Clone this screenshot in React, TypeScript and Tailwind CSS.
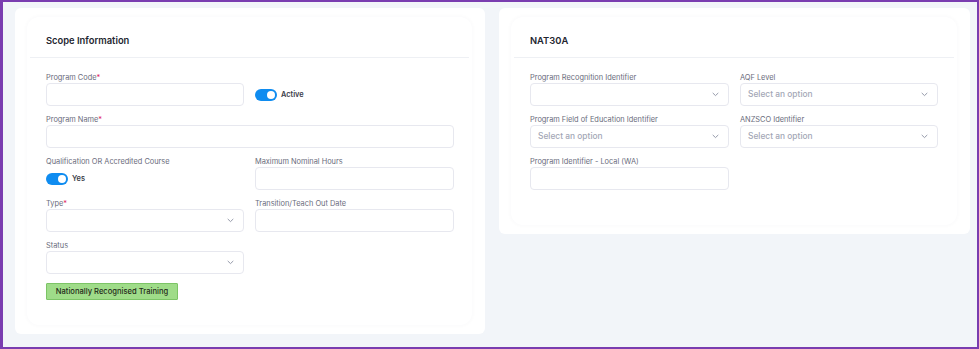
import React from "react";

const font = { fontFamily: "Inter, 'Noto Sans', sans-serif" };

function Chevron() {
  return (
    <svg width="7" height="5" viewBox="0 0 7 5" className="text-[#8a8fa0]">
      <path d="M1 1.2 L3.5 3.6 L6 1.2" fill="none" stroke="currentColor" strokeWidth="0.9" strokeLinecap="round" strokeLinejoin="round" />
    </svg>
  );
}

function Label({ text, req }: { text: string; req?: boolean }) {
  return (
    <div className="h-[11px] pt-[3px] flex items-center text-[7.4px] leading-none text-[#6a6c7c] whitespace-nowrap">
      {text}
      {req && <span className="text-[#e0245e]">*</span>}
    </div>
  );
}

function Input() {
  return <div className="h-[23px] rounded-[4px] border border-[#e7e8ef] bg-white" />;
}

function Select({ placeholder }: { placeholder?: string }) {
  return (
    <div className="h-[23px] rounded-[4px] border border-[#e7e8ef] bg-white flex items-center justify-between pl-[7px] pr-[9px]">
      <span className="text-[8.4px] font-medium text-[#a3a7b6]">{placeholder ?? ""}</span>
      <Chevron />
    </div>
  );
}

function Toggle({ text }: { text: string }) {
  return (
    <div className="h-[23px] flex items-center gap-[4px]">
      <div className="w-[22px] h-[12px] rounded-full bg-[#0f8cf0] relative">
        <div className="absolute right-[2px] top-[2px] w-[8px] h-[8px] rounded-full bg-white" />
      </div>
      <span className="text-[7.4px] font-semibold text-[#3a3c48]">{text}</span>
    </div>
  );
}

function Field({ label, req, children }: { label: string; req?: boolean; children: React.ReactNode }) {
  return (
    <div className="flex flex-col gap-[1px]">
      <Label text={label} req={req} />
      {children}
    </div>
  );
}

function Blank({ children }: { children: React.ReactNode }) {
  return (
    <div className="flex flex-col gap-[1px]">
      <div className="h-[11px]" />
      {children}
    </div>
  );
}

function Header({ title }: { title: string }) {
  return (
    <div className="h-[41px] mx-[3px] border-b border-[#eef0f4] flex items-center pl-[16px] pt-[8px]">
      <span className="text-[9.4px] font-semibold text-[#23252f]">{title}</span>
    </div>
  );
}

export default function App() {
  return (
    <div style={font} className="w-[979px] h-[349px] border-2 border-[#7a3db0] border-l-[3px] bg-[#f2f5f9] flex items-start gap-[14px] pl-[12px] pt-[6px]">
      <div className="w-[470px] h-[326px] bg-white rounded-[6px] pt-[9px] pl-[12px] pr-[13px] pb-[9px]">
        <div className="h-full rounded-[12px] bg-white shadow-[0_0_5px_rgba(30,40,80,0.035)]">
          <Header title="Scope Information" />
          <div className="px-[19px] pt-[13px] grid grid-cols-[198px_199px] gap-x-[11px] gap-y-[7px]">
            <Field label="Program Code" req>
              <Input />
            </Field>
            <Blank>
              <Toggle text="Active" />
            </Blank>
            <div className="col-span-2">
              <Field label="Program Name" req>
                <Input />
              </Field>
            </div>
            <Field label="Qualification OR Accredited Course">
              <Toggle text="Yes" />
            </Field>
            <Field label="Maximum Nominal Hours">
              <Input />
            </Field>
            <Field label="Type" req>
              <Select />
            </Field>
            <Field label="Transition/Teach Out Date">
              <Input />
            </Field>
            <Field label="Status">
              <Select />
            </Field>
            <div />
          </div>
          <div className="px-[19px] pt-[9px]">
            <div className="w-[132px] h-[17px] bg-[#9fdc89] border border-[#7cc466] rounded-[1px] flex items-center justify-center text-[7.6px] font-medium text-[#1f2a1a] whitespace-nowrap">
              Nationally Recognised Training
            </div>
          </div>
        </div>
      </div>
      <div className="w-[471px] h-[226px] bg-white rounded-[6px] pt-[9px] pl-[12px] pr-[13px] pb-[9px]">
        <div className="h-full rounded-[12px] bg-white shadow-[0_0_5px_rgba(30,40,80,0.035)]">
          <Header title="NAT30A" />
          <div className="px-[19px] pt-[13px] grid grid-cols-[199px_198px] gap-x-[11px] gap-y-[7px]">
            <Field label="Program Recognition Identifier">
              <Select />
            </Field>
            <Field label="AQF Level">
              <Select placeholder="Select an option" />
            </Field>
            <Field label="Program Field of Education Identifier">
              <Select placeholder="Select an option" />
            </Field>
            <Field label="ANZSCO Identifier">
              <Select placeholder="Select an option" />
            </Field>
            <Field label="Program Identifier - Local (WA)">
              <Input />
            </Field>
          </div>
        </div>
      </div>
    </div>
  );
}
